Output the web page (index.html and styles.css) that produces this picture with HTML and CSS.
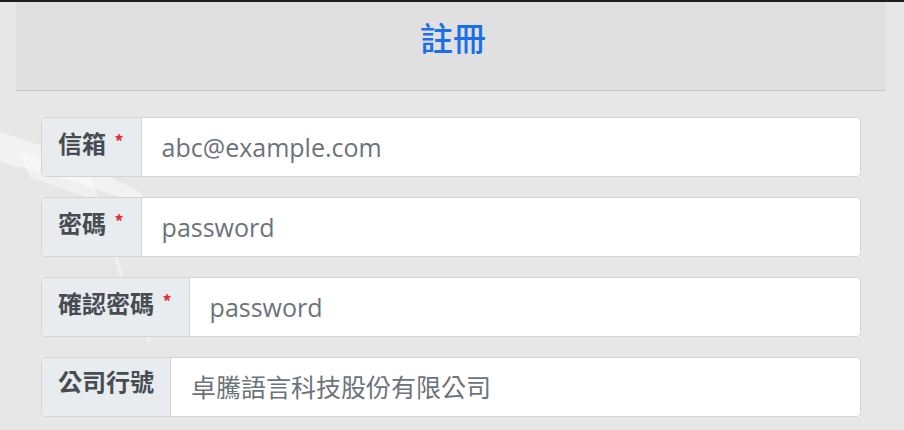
FILE: index.html
```html
<!DOCTYPE html>
<html>
<head>
   <title>註冊</title>
   <link rel="stylesheet" href="styles.css">
</head>
<body>
   <svg class="bg-deco" width="200" height="430" viewBox="0 0 200 430">
       <path d="M0 130 L60 150 L140 190 L150 205 L60 175 L0 160 Z" fill="#ffffff" opacity="0.45"/>
       <path d="M20 150 L90 175 L100 200 L30 175 Z" fill="#ffffff" opacity="0.4"/>
       <path d="M110 240 Q130 300 150 340" stroke="#ffffff" stroke-width="3" fill="none" opacity="0.4"/>
   </svg>
   <div class="page">
       <div class="header">
           <h1>註冊</h1>
       </div>
       <form class="register-form">
           <div class="input-group">
               <label class="group-label" for="email">信箱 <span class="req">*</span></label>
               <input type="text" id="email" placeholder="abc@example.com">
           </div>
           <div class="input-group">
               <label class="group-label" for="password">密碼 <span class="req">*</span></label>
               <input type="text" id="password" placeholder="password">
           </div>
           <div class="input-group">
               <label class="group-label" for="confirm">確認密碼 <span class="req">*</span></label>
               <input type="text" id="confirm" placeholder="password">
           </div>
           <div class="input-group">
               <label class="group-label" for="company">公司行號</label>
               <input type="text" id="company" placeholder="卓騰語言科技股份有限公司">
           </div>
       </form>
   </div>
</body>
</html>
```

FILE: styles.css
```css
body {
    margin: 0;
    height: 430px;
    overflow: hidden;
    background-color: #e7e7e7;
    border-top: 2px solid #1e1e1e;
    font-family: "Open Sans", "Noto Sans CJK TC", sans-serif;
    position: relative;
}
.bg-deco {
    position: absolute;
    left: 0;
    top: 0;
}
.page {
    position: relative;
    width: 870px;
    margin-left: 16px;
}
.header {
    background-color: #e0e0e0;
    border-bottom: 1px solid #c9c9c9;
    height: 89px;
    box-sizing: border-box;
    padding-top: 15px;
    text-align: center;
}
.header h1 {
    margin: 0;
    color: #1a6fea;
    font-family: "Noto Sans CJK TC", sans-serif;
    font-weight: 500;
    font-size: 33px;
    line-height: 40px;
    padding-left: 4px;
}
.register-form {
    padding: 26px 25px 0 25px;
    display: flex;
    flex-direction: column;
    gap: 20px;
}
.input-group {
    display: flex;
    height: 60px;
    box-sizing: border-box;
    border: 1px solid #d2d4d6;
    border-radius: 5px;
    overflow: hidden;
    background: white;
}
.group-label {
    background-color: #e9ecef;
    border-right: 1px solid #d2d4d6;
    color: #474c52;
    font-family: "Noto Sans CJK TC", sans-serif;
    font-weight: 700;
    font-size: 24px;
    line-height: 32px;
    padding: 7px 16px 0 16px;
    white-space: nowrap;
}
.req {
    color: #e0313f;
    font-size: 18px;
    vertical-align: 4px;
    margin-left: 3px;
    margin-right: 1px;
}
input {
    flex: 1;
    border: none;
    outline: none;
    padding: 0 20px;
    font-family: "Open Sans", "Noto Sans CJK TC", sans-serif;
    font-size: 25px;
    background: white;
}
input::placeholder {
    color: #6c737a;
}
```
